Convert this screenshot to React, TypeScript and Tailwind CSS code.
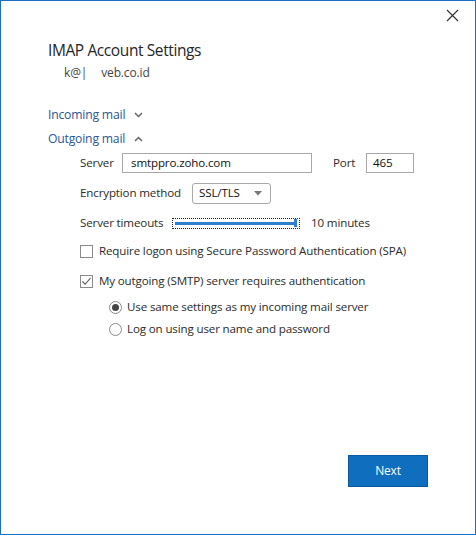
import React from "react";

const font = { fontFamily: '"Open Sans", "Noto Sans", sans-serif' };

export default function App() {
  return (
    <div
      className="w-[476px] h-[535px] bg-white border border-[#1c6ec4] flex flex-col text-[#2b2b2b] text-[11.6px] tracking-[-0.15px]"
      style={font}
    >
      <div className="h-[30px] flex justify-end items-start pr-[16px] pt-[8px]">
        <svg width="13" height="13" viewBox="0 0 13 13">
          <path d="M1 1 L12 12 M12 1 L1 12" stroke="#333" strokeWidth="1.2" />
        </svg>
      </div>
      <div className="pl-[47px] flex flex-col">
        <div className="h-[24px] mt-[8px] flex items-center text-[15.5px] tracking-[-0.4px] text-[#262626]">
          IMAP Account Settings
        </div>
        <div className="h-[18px] mt-[1px] flex items-center text-[12px] text-[#444]">
          <span className="ml-[16px]">k@|</span>
          <span className="ml-[14px]">veb.co.id</span>
        </div>
        <div className="h-[18px] mt-[24px] flex items-center text-[12.2px] tracking-[-0.2px] text-[#2a5699] gap-[9px]">
          <span>Incoming mail</span>
          <svg width="9" height="6" viewBox="0 0 9 6">
            <path d="M1 1 L4.5 4.5 L8 1" stroke="#666" strokeWidth="1.5" fill="none" />
          </svg>
        </div>
        <div className="h-[18px] mt-[6px] flex items-center text-[12.2px] tracking-[-0.2px] text-[#2a5699] gap-[9px]">
          <span>Outgoing mail</span>
          <svg width="9" height="6" viewBox="0 0 9 6">
            <path d="M1 5 L4.5 1.5 L8 5" stroke="#666" strokeWidth="1.5" fill="none" />
          </svg>
        </div>

        <div className="pl-[32px] flex flex-col">
          <div className="h-[20px] mt-[5px] flex items-center">
            <span className="w-[42px]">Server</span>
            <div className="w-[190px] h-[20px] border border-[#a8a8a8] flex items-center pl-[8px] text-[#111]">
              smtppro.zoho.com
            </div>
            <span className="ml-[21px] w-[33px]">Port</span>
            <div className="w-[48px] h-[20px] border border-[#a8a8a8] flex items-center pl-[6px] text-[#111]">
              465
            </div>
          </div>

          <div className="h-[20px] mt-[10px] flex items-center">
            <span className="w-[112px]">Encryption method</span>
            <div className="w-[79px] h-[21px] border border-[#a8a8a8] rounded-[3px] flex items-center justify-between pl-[6px] pr-[8px] text-[#111]">
              <span>SSL/TLS</span>
              <svg width="8" height="5" viewBox="0 0 8 5">
                <path d="M0 0 L8 0 L4 4.5 Z" fill="#777" />
              </svg>
            </div>
          </div>

          <div className="h-[20px] mt-[10px] flex items-center">
            <span className="w-[92px]">Server timeouts</span>
            <div className="w-[128px] h-[11px] border border-dotted border-[#222] flex items-center px-[2px]">
              <div className="flex-1 h-[3px] bg-[#2f7fd0]" />
              <div className="w-[3px] h-[8px] bg-[#2f7fd0]" />
            </div>
            <span className="ml-[11px]">10 minutes</span>
          </div>

          <div className="h-[20px] mt-[8px] flex items-center">
            <div className="w-[13px] h-[13px] border border-[#8a8a8a] bg-white" />
            <span className="ml-[6px]">Require logon using Secure Password Authentication (SPA)</span>
          </div>

          <div className="h-[20px] mt-[10px] flex items-center">
            <div className="w-[13px] h-[13px] border border-[#8a8a8a] bg-white flex items-center justify-center">
              <svg width="11" height="11" viewBox="0 0 11 11">
                <path d="M1.5 5.5 L4.2 8.3 L9.5 2" stroke="#555" strokeWidth="1.1" fill="none" />
              </svg>
            </div>
            <span className="ml-[6px]">My outgoing (SMTP) server requires authentication</span>
          </div>

          <div className="pl-[29px] flex flex-col">
            <div className="h-[20px] mt-[6px] flex items-center">
              <div className="w-[13px] h-[13px] rounded-full border border-[#8a8a8a] flex items-center justify-center">
                <div className="w-[7px] h-[7px] rounded-full bg-[#444]" />
              </div>
              <span className="ml-[5px]">Use same settings as my incoming mail server</span>
            </div>
            <div className="h-[20px] mt-[2px] flex items-center">
              <div className="w-[13px] h-[13px] rounded-full border border-[#8a8a8a]" />
              <span className="ml-[5px]">Log on using user name and password</span>
            </div>
          </div>
        </div>
      </div>

      <div className="flex justify-end pr-[47px] mt-[116px]">
        <div className="w-[80px] h-[32px] bg-[#106ebe] border border-[#0b5a9e] text-white flex items-center justify-center text-[12px]">
          Next
        </div>
      </div>
    </div>
  );
}
